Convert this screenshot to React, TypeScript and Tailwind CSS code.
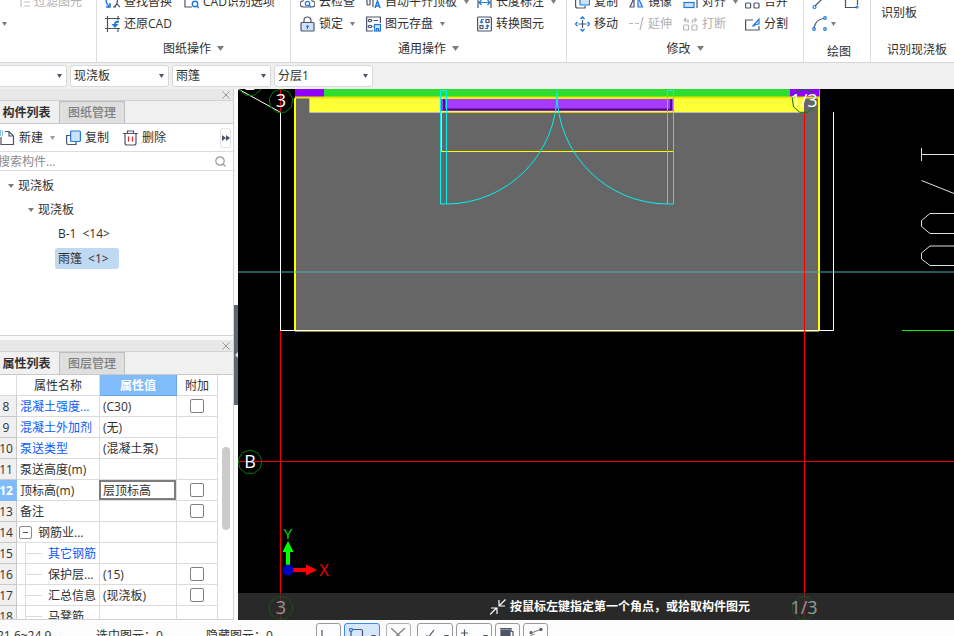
import { useState, type ReactNode } from "react";

/* ---------- small shared pieces ---------- */

function Caret({ big = false, className = "text-[#7d7d7d]" }: { big?: boolean; className?: string }) {
  return (
    <svg width={big ? 7 : 5} height={big ? 5 : 4} viewBox="0 0 8 5" className={`shrink-0 ${className}`} preserveAspectRatio="none">
      <path d="M0 0h8L4 5z" fill="currentColor" />
    </svg>
  );
}

function Glyph({ children, className = "" }: { children: ReactNode; className?: string }) {
  return (
    <svg width="15" height="16" viewBox="0 0 15 16" fill="none" stroke="#4b5468" strokeWidth="1.2" className={`shrink-0 ${className}`}>
      {children}
    </svg>
  );
}

const BLUE = "#1f7ae0";
const PALE = "#cfe2fb";

type ToolProps = { icon: ReactNode; label: string; caret?: boolean; disabled?: boolean };

function Tool({ icon, label, caret, disabled }: ToolProps) {
  return (
    <button disabled={disabled} className={`flex h-[22px] items-center gap-1 whitespace-nowrap ${disabled ? "text-[#b0b0b0]" : ""}`}>
      {icon}
      {label}
      {caret && <Caret className="ml-[3px] text-[#7d7d7d]" />}
    </button>
  );
}

function GroupLabel({ children }: { children: string }) {
  return (
    <button className="flex h-[27px] w-full items-center justify-center gap-1.5">
      {children}
      <Caret big />
    </button>
  );
}

/* ---------- ribbon icons ---------- */

const icons = {
  filter: (
    <Glyph className="opacity-50">
      <path d="M6 1v12M9 4h6M9 8h6M9 12h6" stroke="#888" />
    </Glyph>
  ),
  find: (
    <Glyph>
      <path d="M1 5c0 4 1 6 4 8M5 9v4H1" stroke={BLUE} strokeWidth="1.5" />
      <path d="M9 13c4-3 4-6 3-9M12 10l3 3M8 13h3" />
    </Glyph>
  ),
  cadOptions: (
    <Glyph>
      <path d="M1 3v10h7M14 3v2" />
      <circle cx="11" cy="10" r="2.7" stroke={BLUE} strokeWidth="1.4" />
      <path d="M13 12l2 2" stroke={BLUE} strokeWidth="1.4" />
    </Glyph>
  ),
  restore: (
    <Glyph>
      <path d="M2.500 0v16M0 2.500h15M0 12.500h15M13 0v4M13 12v4" />
      <path d="M14 5.500c-3 0-4 .5-4 2.500" stroke={BLUE} strokeWidth="1.800" />
      <path d="M6.500 8h7l-3.500 4z" fill={BLUE} stroke="none" />
    </Glyph>
  ),
  cloud: (
    <Glyph>
      <path d="M4 13C-1 13-1 7 3 7c0-5 9-5 9 0 4 0 4 6 0 6z" />
      <circle cx="7.5" cy="9.5" r="2.2" stroke={BLUE} />
      <path d="M9 11l2 2" stroke={BLUE} />
    </Glyph>
  ),
  lock: (
    <Glyph>
      <path d="M4 7V4.500a3.500 3.500 0 0 1 7 0V7" />
      <rect x="1" y="6.500" width="13" height="8.500" rx="1" fill={PALE} />
      <path d="M7.500 9v4M6 10.500h3" stroke={BLUE} />
    </Glyph>
  ),
  flush: (
    <Glyph>
      <rect x="1" y="4" width="3" height="7" rx="1" />
      <path d="M7 2v11" />
      <path d="M9 14l2.500-7L14 14M10 12h3" stroke={BLUE} strokeWidth="1.500" />
    </Glyph>
  ),
  save: (
    <Glyph>
      <path d="M7 15H.6V1h13.800V7M7.500 4.500h4.500M6.500 10.500h1" />
      <ellipse cx="4" cy="4.500" rx="1.800" ry="1.200" />
      <ellipse cx="4" cy="10.500" rx="1.800" ry="1.200" />
      <rect x="8.500" y="8.500" width="6" height="6.500" fill={PALE} stroke={BLUE} />
      <path d="M10.500 15v-2.500h2V15" stroke={BLUE} />
    </Glyph>
  ),
  length: (
    <Glyph>
      <path d="M1 3v11M14 3v11" />
      <path d="M2 8.500h11M4.500 6L2 8.500 4.500 11M10.500 6L13 8.500 10.500 11" stroke={BLUE} />
    </Glyph>
  ),
  convert: (
    <Glyph>
      <rect x=".6" y="1" width="13.800" height="14" rx="1" />
      <rect x="9" y="3.500" width="3" height="3" />
      <rect x="3" y="9.500" width="3" height="3" />
      <path d="M7 3.500H4.500V7M3 5.500L4.500 7 6 5.500M8 12.500h2.500V9M9 10.500L10.500 9 12 10.500" stroke={BLUE} />
    </Glyph>
  ),
  copy: (
    <Glyph>
      <path d="M4 5H.6v7q0 2 2 2H10v-2" />
      <rect x="5" y="1" width="9.500" height="10" rx="1" fill={PALE} stroke={BLUE} />
    </Glyph>
  ),
  move: (
    <Glyph>
      <path d="M7.500 4v8M3.500 8h8" />
      <path d="M5.500 3l2-2 2 2M5.500 13l2 2 2-2M2.500 6l-2 2 2 2M12.500 6l2 2-2 2" stroke={BLUE} strokeWidth="1.500" />
    </Glyph>
  ),
  mirror: (
    <Glyph>
      <path d="M5 4v9H1z" />
      <path d="M9 3v10h4.500z" fill={PALE} stroke={BLUE} />
    </Glyph>
  ),
  extend: (
    <Glyph>
      <path d="M0 7.500h4M6 7.500h4M14 1l-3 13" stroke="#b8b8b8" />
    </Glyph>
  ),
  align: (
    <Glyph>
      <rect x="1" y="8.500" width="10" height="5" fill={PALE} stroke={BLUE} />
      <path d="M14 1v13M2 5h9" />
    </Glyph>
  ),
  break: (
    <Glyph>
      <rect x=".6" y="9" width="5" height="5" rx="1" stroke="#b8b8b8" />
      <rect x="9" y="9" width="5" height="5" rx="1" stroke="#b8b8b8" />
      <path d="M1 4h4v3M9.500 7V4h4M3 2L1 4l2 2M11.500 2l2 2-2 2" stroke="#b8b8b8" />
    </Glyph>
  ),
  merge: (
    <Glyph>
      <rect x=".6" y="9" width="5" height="5" rx="1" />
      <rect x="9" y="9" width="5" height="5" rx="1" />
      <path d="M3 6V4h9v2" stroke={BLUE} />
    </Glyph>
  ),
  split: (
    <Glyph>
      <path d="M8 4H.6v10h13.400V10" />
      <path d="M7.500 10.500l6.500-7.500v5l-3 .5z" fill={PALE} stroke={BLUE} />
    </Glyph>
  ),
};

function Ribbon() {
  return (
    <header className="flex h-[63px] shrink-0 items-end overflow-hidden border-b border-[#d5d5d5] bg-white">
      <div className="h-[71px] w-[97px] shrink-0 border-r border-[#dcdcdc]">
        <div className="pl-[15px]">
          <Tool icon={icons.filter} label="过滤图元" disabled />
        </div>
        <button aria-label="更多" className="flex h-[22px] items-center pl-0.5">
          <Caret />
        </button>
      </div>

      <div className="h-[71px] w-[194px] shrink-0 border-r border-[#dcdcdc]">
        <div className="grid grid-cols-[79px_auto] justify-start pl-2">
          <Tool icon={icons.find} label="查找替换" />
          <Tool icon={icons.cadOptions} label="CAD识别选项" />
          <Tool icon={icons.restore} label="还原CAD" />
        </div>
        <GroupLabel>图纸操作</GroupLabel>
      </div>

      <div className="h-[71px] w-[276px] shrink-0 border-r border-[#dcdcdc]">
        <div className="grid grid-cols-[66px_111px_auto] justify-start pl-[9px]">
          <Tool icon={icons.cloud} label="云检查" />
          <Tool icon={icons.flush} label="自动平齐顶板" caret />
          <Tool icon={icons.length} label="长度标注" caret />
          <Tool icon={icons.lock} label="锁定" caret />
          <Tool icon={icons.save} label="图元存盘" caret />
          <Tool icon={icons.convert} label="转换图元" />
        </div>
        <GroupLabel>通用操作</GroupLabel>
      </div>

      <div className="h-[71px] w-[237px] shrink-0 border-r border-[#dcdcdc]">
        <div className="grid grid-cols-[54px_54px_62px_auto] justify-start pl-2">
          <Tool icon={icons.copy} label="复制" />
          <Tool icon={icons.mirror} label="镜像" />
          <Tool icon={icons.align} label="对齐" caret />
          <Tool icon={icons.merge} label="合并" />
          <Tool icon={icons.move} label="移动" />
          <Tool icon={icons.extend} label="延伸" disabled />
          <Tool icon={icons.break} label="打断" disabled />
          <Tool icon={icons.split} label="分割" />
        </div>
        <GroupLabel>修改</GroupLabel>
      </div>

      <div className="h-[71px] w-[67px] shrink-0 border-r border-[#dcdcdc]">
        <div className="grid grid-cols-[32px_auto] justify-start pl-2">
          <button aria-label="直线" className="flex h-[22px] items-center">
            <Glyph>
              <path d="M3 12L12 3" />
              <circle cx="2.500" cy="13" r="1.500" stroke={BLUE} />
            </Glyph>
          </button>
          <button aria-label="矩形" className="flex h-[22px] items-center">
            <Glyph>
              <path d="M1.500 2v11.500H12M13.500 2v9" />
              <circle cx="13" cy="13" r="1" stroke={BLUE} />
            </Glyph>
          </button>
          <button aria-label="弧线" className="flex h-[22px] items-center gap-1">
            <Glyph>
              <path d="M2 12C3 6 6 3 12 2.500" />
              <circle cx="2" cy="13" r="1.300" stroke={BLUE} />
              <circle cx="13" cy="2" r="1.300" stroke={BLUE} />
              <circle cx="13" cy="13" r="1.300" stroke={BLUE} />
            </Glyph>
            <Caret />
          </button>
        </div>
        <div className="pt-[5px] pl-1 text-center leading-6">绘图</div>
      </div>

      <div className="flex h-[71px] flex-1 flex-col whitespace-nowrap">
        <button className="mt-3 h-[22px] pl-2.5 text-left">识别板</button>
        <div className="pt-[15px] pl-4 leading-6">识别现浇板</div>
      </div>
    </header>
  );
}

function Picker({ label, value }: { label: string; value: string }) {
  return (
    <label className="relative block h-[22px] w-[99px] shrink-0">
      <select aria-label={label} className="h-full w-full appearance-none rounded-[3px] border border-[#d8d8d8] bg-white pl-[3px] text-xs outline-none">
        <option>{value}</option>
      </select>
      <Caret className="pointer-events-none absolute top-[9px] right-[5px] text-[#4b5468]" />
    </label>
  );
}

function FilterBar() {
  return (
    <div className="flex h-[26px] shrink-0 items-center gap-[3px] overflow-hidden bg-[#f0f0f0]">
      <div className="flex w-[67px] shrink-0 justify-end overflow-hidden">
        <Picker label="楼层" value="" />
      </div>
      <Picker label="构件类别" value="现浇板" />
      <Picker label="构件" value="雨篷" />
      <Picker label="分层" value="分层1" />
    </div>
  );
}

/* ---------- docked panels ---------- */

function PanelHead({ tabs }: { tabs: [string, string] }) {
  return (
    <>
      <div className="flex h-3 shrink-0 items-center justify-end border-b border-[#d2d2d2] bg-[#e8e8e8] pr-[3px]">
        <button aria-label="关闭">
          <svg width="8" height="8" viewBox="0 0 8 8" stroke="#9a9a9a" fill="none">
            <path d="M.5.5l7 7M7.500.5l-7 7" />
          </svg>
        </button>
      </div>
      <div role="tablist" className="flex h-[23px] shrink-0 border-b border-[#c9c9c9] bg-[#f0f0f0]">
        <button role="tab" aria-selected="true" className="w-[59px] pt-0.5 pr-1.5 text-center font-bold whitespace-nowrap text-[#303030]">
          {tabs[0]}
        </button>
        <button role="tab" aria-selected="false" className="w-[66px] border border-b-0 border-[#bdbdbd] bg-[#dfdfdf] pt-px text-center font-medium text-[#808080]">
          {tabs[1]}
        </button>
      </div>
    </>
  );
}

function TreeItem({ name, count }: { name: string; count: number }) {
  return (
    <span className="flex gap-1.5">
      <span>{name}</span>
      <span>&lt;{count}&gt;</span>
    </span>
  );
}

function ComponentPanel() {
  return (
    <section className="flex h-[247px] shrink-0 flex-col border-b border-[#d2d2d2] bg-white">
      <PanelHead tabs={["构件列表", "图纸管理"]} />
      <div className="flex h-7 shrink-0 items-center border-b border-[#dcdcdc] pt-px">
        <button className="flex w-[66px] items-center gap-1">
          <Glyph>
            <path d="M5 1.500h4l4.500 4.500v8.500H1V7M9 1.500V6h4.500" />
            <path d="M0 1h4M0 3h4M0 5h4" stroke={BLUE} strokeDasharray="1 1" />
          </Glyph>
          新建
          <Caret className="ml-[3px] text-[#9a9a9a]" />
        </button>
        <button className="flex w-[57px] items-center gap-1">
          <Glyph>
            <path d="M5 5.500H.6V13q0 1.500 1.500 1.500H10V12" />
            <rect x="4.600" y="1" width="9.800" height="10.500" rx="1" fill={PALE} stroke={BLUE} />
          </Glyph>
          复制
        </button>
        <button className="flex items-center gap-1">
          <Glyph>
            <path d="M0 3.500h15M4.500 3.500V1h6v2.500M2 3.500V13q0 2 2 2h7q2 0 2-2V3.500" />
            <path d="M5.500 6.500v5M9.500 6.500v5" stroke="#e0242e" />
          </Glyph>
          删除
        </button>
        <button aria-label="展开" className="mr-0.5 ml-auto flex h-5 w-[11px] items-center justify-center rounded-[3px] border border-[#e4e4e4]">
          <svg width="8" height="6" viewBox="0 0 8 6" className="shrink-0" fill="#4b5468">
            <path d="M0 0l4 3-4 3zM4 0l4 3-4 3z" />
          </svg>
        </button>
      </div>
      <div className="flex h-[19px] shrink-0 items-center border-b border-[#dcdcdc] pt-px pr-[7px]">
        <input aria-label="搜索构件" placeholder="搜索构件..." className="-ml-0.5 min-w-0 flex-1 text-xs outline-none placeholder:text-[#8c8c8c]" />
        <svg width="11" height="11" viewBox="0 0 11 11" fill="none" stroke="#999" strokeWidth="1.200">
          <circle cx="5" cy="5" r="4.200" />
          <path d="M8 8l2.500 2.500" />
        </svg>
      </div>
      <ul className="flex-1 overflow-hidden pt-[3px] leading-6">
        <li className="flex items-center gap-1 pl-2">
          <Caret className="w-[6px] text-[#7d7d7d]" />
          现浇板
        </li>
        <li className="flex items-center gap-1 pl-7">
          <Caret className="w-[6px] text-[#7d7d7d]" />
          现浇板
        </li>
        <li className="pl-[58px]">
          <TreeItem name="B-1" count={14} />
        </li>
        <li className="flex h-6 items-center pl-[55px]">
          <div className="h-[21px] rounded-[3px] bg-[#c0d9f2] pr-2.5 pl-[3px] leading-[21px]">
            <TreeItem name="雨篷" count={1} />
          </div>
        </li>
      </ul>
    </section>
  );
}

type Row = {
  no: number;
  name: string;
  value?: string;
  check?: boolean;
  link?: boolean;
  child?: boolean;
  parent?: boolean;
};

const rows: Row[] = [
  { no: 8, name: "混凝土强度...", value: "(C30)", check: true, link: true },
  { no: 9, name: "混凝土外加剂", value: "(无)", link: true },
  { no: 10, name: "泵送类型", value: "(混凝土泵)", link: true },
  { no: 11, name: "泵送高度(m)" },
  { no: 12, name: "顶标高(m)", value: "层顶标高", check: true },
  { no: 13, name: "备注", check: true },
  { no: 14, name: "钢筋业...", parent: true },
  { no: 15, name: "其它钢筋", link: true, child: true },
  { no: 16, name: "保护层...", value: "(15)", check: true, child: true },
  { no: 17, name: "汇总信息", value: "(现浇板)", check: true, child: true },
  { no: 18, name: "马凳筋", child: true },
];

function PropertyPanel() {
  const [selected, setSelected] = useState(12);

  return (
    <section className="flex min-h-0 flex-1 flex-col border-b border-[#d2d2d2] bg-white">
      <PanelHead tabs={["属性列表", "图层管理"]} />
      <div className="flex min-h-0 flex-1 overflow-hidden">
        <table className="w-[218px] shrink-0 table-fixed border-separate border-spacing-0 self-start whitespace-nowrap">
          <colgroup>
            <col className="w-[17px]" />
            <col className="w-[83px]" />
            <col className="w-[77px]" />
            <col className="w-[41px]" />
          </colgroup>
          <thead>
            <tr className="h-[21px]">
              <th className="border-r border-b border-[#dcdcdc] p-0" aria-label="序号" />
              <th className="border-r border-b border-[#dcdcdc] p-0 pt-px font-normal">属性名称</th>
              <th className="border-r border-b border-[#6aa5ea] bg-[#80bbfa] p-0 pt-px font-bold text-white">属性值</th>
              <th className="border-r border-b border-[#dcdcdc] p-0 pt-px font-normal">附加</th>
            </tr>
          </thead>
          <tbody>
            {rows.map((row) => {
              const on = row.no === selected;
              return (
                <tr key={row.no} className="h-[21px]" onClick={() => setSelected(row.no)}>
                  <td
                    className={`overflow-hidden border-r border-b p-0 text-center ${
                      on ? "border-[#80bbfa] bg-[#80bbfa] font-bold text-white" : "border-[#c9c9c9] bg-[#f0f0f0]"
                    }`}
                  >
                    <div className="-ml-1 h-5 leading-[22px]">{row.no}</div>
                  </td>
                  <td className={`border-r border-b border-[#dcdcdc] p-0 ${row.link ? "text-[#0b5cff]" : ""}`}>
                    <div className={`flex h-5 items-center overflow-hidden leading-[22px] ${row.parent ? "pl-0.5" : "pl-[3px]"}`}>
                      {row.parent && (
                        <button aria-label="折叠" className="mr-1.5 flex size-[13px] shrink-0 items-center justify-center rounded-[2px] border border-[#8c8c8c]">
                          <span className="h-px w-[5px] bg-[#505050]" />
                        </button>
                      )}
                      {row.child && (
                        <span className="mr-1.5 ml-[5px] flex h-5 w-[17px] shrink-0 items-center border-l border-[#dcdcdc]">
                          <span className="h-px w-full bg-[#dcdcdc]" />
                        </span>
                      )}
                      <span className="pt-px">{row.name}</span>
                    </div>
                  </td>
                  <td className="border-r border-b border-[#dcdcdc] p-0">
                    <div className={`flex h-5 items-center ${on ? "-ml-px border-2 border-[#7d7d7d] pl-0.5" : "pl-[3px]"}`}>
                      <span className="pt-px">{row.value}</span>
                    </div>
                  </td>
                  <td className="border-r border-b border-[#dcdcdc] p-0">
                    {row.check && (
                      <input
                        type="checkbox"
                        aria-label={`附加 ${row.name}`}
                        className="mx-auto block size-3.5 appearance-none rounded-[2px] border border-[#808080] bg-white checked:bg-[#80bbfa]"
                      />
                    )}
                  </td>
                </tr>
              );
            })}
          </tbody>
        </table>
        <div className="flex flex-1 justify-center pt-[72px]">
          <div className="h-[83px] w-2 rounded-full bg-[#cbcbcb]" />
        </div>
      </div>
    </section>
  );
}

/* ---------- drawing area ---------- */

function AxisMark({ x, y, label, dim = false }: { x: number; y: number; label: string; dim?: boolean }) {
  const points = Array.from({ length: 9 }, (_, i) => {
    const a = (i * 2 * Math.PI) / 9 - Math.PI / 2;
    return `${x + 12 * Math.cos(a)},${y + 12 * Math.sin(a)}`;
  }).join(" ");
  return (
    <g opacity={dim ? 0.5 : 1}>
      <polygon points={points} fill="none" stroke="#0a7a0a" />
      <text x={x} y={y + 6} textAnchor="middle" fontSize="18" fill="#fff">
        {label}
      </text>
    </g>
  );
}

function Drawing() {
  return (
    <svg
      viewBox="238 89 716 531"
      preserveAspectRatio="xMinYMin slice"
      className="block h-full w-full bg-black font-['Open_Sans','Noto_Sans_CJK_SC',sans-serif]"
      fill="none"
    >
      {/* slab */}
      <rect x="295" y="97" width="525" height="234" fill="#666" />
      {/* walls and columns */}
      <rect x="295" y="89" width="525" height="8" fill="#2fdd2f" />
      <rect x="295" y="89" width="29" height="8" fill="#9000ff" />
      <rect x="790" y="89" width="29" height="8" fill="#9000ff" />
      <rect x="309" y="98" width="495" height="14" fill="#ffff38" />
      <path d="M309.500 98v14.500H804" stroke="#b8b8b8" />
      <rect x="441" y="99" width="232" height="12" fill="#a63aff" />
      <path d="M444 99v10.500H671V99" stroke="#4a0a90" strokeWidth="2" />
      <path d="M295 97.500H820" stroke="#e8e800" strokeWidth="2" />
      <path d="M441 112.500H673" stroke="#d9c81c" />
      <path d="M295 98V331M819 98V331" stroke="#ffff00" strokeWidth="2" />
      <path d="M295 331.500H819" stroke="#8a8a20" />
      <path d="M441.500 112V151.500H673.500V112" stroke="#ffff00" />

      {/* double door */}
      <g stroke="#00f2f2">
        <path d="M440.500 90.500h6v113.500h-6zM667.500 90.500h6v113.500h-6z" />
        <path d="M447 204A111 111 0 0 0 557 93V89M667 204A111 111 0 0 1 557 93" />
      </g>

      {/* canopy outline */}
      <path d="M280.500 112V330.500H833.500V112" stroke="#fff" />
      <path d="M238 89L280 112" stroke="#fff" />
      <path d="M238 272H954" stroke="#4fb0b0" />

      {/* grid axes */}
      <path d="M280.500 89V112M280.500 331V620M804.500 112V620M238 461.500H954" stroke="#f00000" />
      <AxisMark x={250} y={84} label="2" />
      <AxisMark x={281} y={101} label="3" />
      <AxisMark x={804} y={101} label="1/3" />
      <AxisMark x={250} y={462} label="B" />

      {/* linework at the right edge */}
      <path
        d="M921.500 148v13M922 154.500h32M921.500 180.500L954 193.500M954 213.500H930l-8.500 7v6l8.500 7H954M954 246H930l-8.500 7v6l8.500 6.500H954"
        stroke="#e0e0e0"
      />
      <path d="M902 330.500H954" stroke="#00f000" />

      {/* coordinate tripod */}
      <path d="M288 566V551" stroke="#00ff00" strokeWidth="4" />
      <path d="M288 541l5.500 11h-11z" fill="#00ff00" />
      <path d="M293 570h14" stroke="#ff0000" strokeWidth="4" />
      <path d="M317 570l-11 5.500v-11z" fill="#ff0000" />
      <circle cx="288" cy="570" r="5.500" fill="#0000c0" />
      <text x="288" y="539" textAnchor="middle" fontSize="15" fill="#00e000">
        Y
      </text>
      <text x="324" y="576" textAnchor="middle" fontSize="16" fill="#ff0000">
        X
      </text>

      <rect x="238" y="593" width="716" height="27" fill="#333" fillOpacity="0.8" />
      <AxisMark x={281} y={608} label="3" dim />
      <AxisMark x={804} y={608} label="1/3" dim />
    </svg>
  );
}

function Canvas() {
  return (
    <main className="relative min-w-0 flex-1 overflow-hidden bg-black">
      <Drawing />
      <p className="absolute inset-x-0 bottom-0 flex h-[27px] items-center justify-center gap-1 pl-12 font-bold text-white">
        <svg width="16" height="16" viewBox="0 0 16 16" fill="none" stroke="#fff" strokeWidth="1.200">
          <path d="M0 15.500L6.500 9M1 9h6v6M15.500.500L9 7M9 1v6h6" />
        </svg>
        按鼠标左键指定第一个角点，或拾取构件图元
      </p>
    </main>
  );
}

/* ---------- status bar ---------- */

const box = "flex h-[22px] shrink-0 items-start rounded-[3px] border pt-1 pl-1";

function StatusBar() {
  return (
    <footer className="flex h-4 shrink-0 items-start overflow-hidden bg-[#fcfcfc] whitespace-nowrap">
      <div className="flex w-[316px] shrink-0 pt-[7px] leading-[18px]">
        <span className="w-24">
          <span className="-ml-[3px]">21.6~24.9</span>
        </span>
        <span className="w-[110px]">选中图元：0</span>
        <span>隐藏图元：0</span>
      </div>
      <div className="flex gap-[3px] pt-[3px]">
        <button aria-label="正交" className={`${box} w-[25px] border-[#9a9a9a]`}>
          <Glyph><path d="M1 2v10h12" /></Glyph>
        </button>
        <button aria-label="矩形框选" className={`${box} w-9 border-[#3a8eea] bg-[#d6e6fb]`}>
          <Glyph>
            <path d="M3.500 1.500h8q2 0 2 2V13M2 3v10" />
            <circle cx="2" cy="1.800" r="1.500" stroke={BLUE} />
          </Glyph>
          <Caret className="mt-[7px] ml-[7px] text-[#4b5468]" />
        </button>
        <button aria-label="交点" className={`${box} ml-[3px] w-[25px] border-[#b0b0b0]`}>
          <Glyph><path d="M0 0l14 13M14 0L0 13" stroke="#777" /></Glyph>
        </button>
        <button aria-label="垂点" className={`${box} ml-[3px] w-9 border-[#9a9a9a]`}>
          <Glyph><path d="M12 2l-7 9M5 7v5h5" /></Glyph>
          <Caret className="mt-[7px] ml-[7px] text-[#4b5468]" />
        </button>
        <button aria-label="偏移" className={`${box} w-9 border-[#9a9a9a]`}>
          <Glyph><path d="M0 5h7M3.500 1.500v7" /></Glyph>
          <Caret className="mt-[7px] ml-[7px] text-[#4b5468]" />
        </button>
        <button aria-label="图元显示" className={`${box} w-[25px] border-[#9a9a9a]`}>
          <Glyph>
            <rect x="1" y="2" width="9" height="9" fill="#4b5468" />
            <path d="M0 .5h11v3h2V12" />
          </Glyph>
        </button>
        <button aria-label="圆弧" className={`${box} w-[25px] border-[#9a9a9a]`}>
          <Glyph>
            <path d="M3 5L14 1M2 12q0-6 5-6" stroke="#888" />
            <circle cx="13" cy="1.500" r="1" />
            <circle cx="3" cy="4.500" r="1" />
          </Glyph>
        </button>
      </div>
    </footer>
  );
}

export default function App() {
  return (
    <div className="flex h-screen flex-col overflow-hidden bg-[#fafafa] font-['Open_Sans','Noto_Sans_CJK_SC',sans-serif] text-xs text-[#303030]">
      <Ribbon />
      <FilterBar />
      <div className="flex min-h-0 flex-1">
        <aside className="flex w-[234px] shrink-0 flex-col gap-1 border-r border-[#d2d2d2]">
          <ComponentPanel />
          <PropertyPanel />
        </aside>
        <div className="flex w-1 shrink-0 items-center">
          <button aria-label="收起面板" className="flex h-[100px] w-full items-center justify-end bg-[#5c6775]">
            <svg width="3" height="6" viewBox="0 0 3 6" fill="#e0e0e0">
              <path d="M3 0v6L0 3z" />
            </svg>
          </button>
        </div>
        <Canvas />
      </div>
      <StatusBar />
    </div>
  );
}
